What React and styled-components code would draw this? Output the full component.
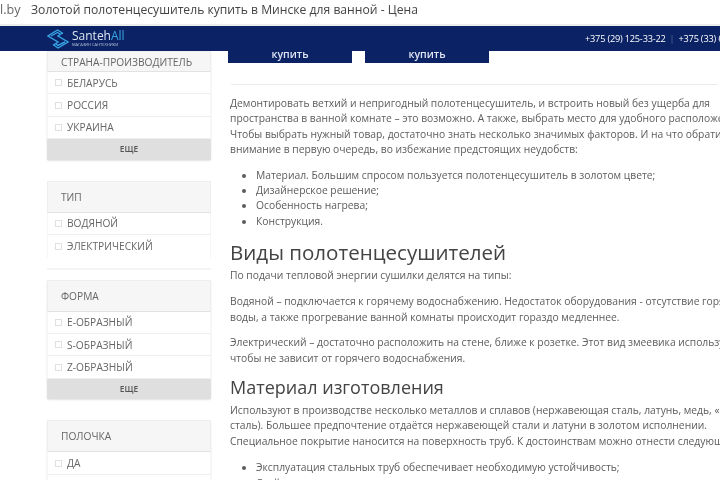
import React from "react";
import styled, { createGlobalStyle } from "styled-components";

const GlobalStyle = createGlobalStyle`
  html, body {
    margin: 0;
    padding: 0;
    background: #fff;
  }
  * {
    box-sizing: border-box;
  }
`;

const Page = styled.div`
  width: 720px;
  height: 480px;
  overflow: hidden;
  background: #fff;
  font-family: "Open Sans", "Noto Sans", sans-serif;
  color: #5c5c5c;
  filter: blur(0.5px);
`;

const TitleStrip = styled.div`
  height: 26px;
  display: flex;
  align-items: center;
  border-bottom: 2px solid #ededed;
  font-size: 12.15px;
  color: #444;
  white-space: nowrap;
  padding-bottom: 6px;
`;

const Domain = styled.span`
  width: 31px;
  font-size: 12.6px;
  color: #666;
`;

const NavBar = styled.header`
  position: relative;
  z-index: 2;
  height: 25px;
  background: #0b2265;
  display: flex;
  align-items: center;
  padding-left: 47px;
  white-space: nowrap;
  overflow: hidden;
`;

const Logo = styled.div`
  display: flex;
  align-items: center;
  gap: 3px;
`;

const LogoWords = styled.div`
  display: flex;
  flex-direction: column;
  line-height: 1;
`;

const LogoName = styled.span`
  font-size: 12px;
  color: #dde5f2;
  span {
    color: #38a5e4;
  }
`;

const LogoSub = styled.span`
  font-size: 4px;
  color: #b8c4da;
  margin-top: 1px;
`;

const Phones = styled.div`
  margin-left: auto;
  width: 135px;
  overflow: hidden;
  font-size: 9.2px;
  color: #fff;
  letter-spacing: -0.2px;
  padding-bottom: 1px;
  i {
    font-style: normal;
    color: #5a6c9c;
    margin: 0 4px;
  }
`;

const Body = styled.div`
  display: flex;
`;

const Sidebar = styled.aside`
  width: 164px;
  margin-left: 47px;
  flex: none;
  display: flex;
  flex-direction: column;
`;

const Panel = styled.section`
  margin-bottom: ${(p) => p.$gap || 21}px;
  border-radius: 2px;
  box-shadow: ${(p) => (p.$flat ? "none" : "0 1px 2px rgba(0, 0, 0, 0.12)")};
`;

const PanelHead = styled.div`
  height: ${(p) => p.$height || 32}px;
  background: #f6f6f6;
  border: 1px solid #eee;
  border-bottom: 1px solid #e2e2e2;
  display: flex;
  align-items: center;
  padding-left: 13px;
  font-size: 10.2px;
  color: #666;
  white-space: nowrap;
`;

const Row = styled.div`
  height: 22.4px;
  display: flex;
  align-items: center;
  gap: 5px;
  padding-left: 8px;
  border-bottom: 1px solid #eee;
  border-left: 1px solid #f6f6f6;
  border-right: 1px solid #f6f6f6;
  font-size: 10.2px;
  color: #666;
  &:last-of-type {
    border-bottom: ${(p) => (p.$open ? "none" : "1px solid #eee")};
  }
`;

const Check = styled.span`
  width: 7px;
  height: 7px;
  margin-left: -1px;
  border: 1px solid #e0e0e0;
  background: #fff;
  flex: none;
`;

const More = styled.div`
  height: 20.6px;
  padding-bottom: 1px;
  background: #dfdfdf;
  display: flex;
  align-items: center;
  justify-content: center;
  font-size: 8.4px;
  font-weight: 600;
  color: #555;
`;

const Divider = styled.div`
  height: 2px;
  background: #f4f4f4;
  margin-bottom: 10px;
`;

const Main = styled.main`
  margin-left: 17px;
  width: 490px;
  flex: none;
  font-size: 10.3px;
  line-height: 15.4px;
  white-space: nowrap;
`;

const Buttons = styled.div`
  display: flex;
  gap: 13px;
  margin-top: -10px;
`;

const BuyButton = styled.div`
  width: 124px;
  height: 22px;
  background: #0b2265;
  color: #dfe5f2;
  font-size: 10.5px;
  font-weight: 600;
  line-height: 26px;
  text-align: center;
  overflow: hidden;
`;

const Rule = styled.div`
  height: 1px;
  background: #ececec;
  margin: 21px 0 11px 3px;
`;

const Para = styled.p`
  margin: 0 0 10px 2px;
`;

const Bullets = styled.ul`
  margin: 0 0 0 2px;
  padding: 0 0 0 26px;
`;

const Article = styled.div`
  line-height: 15.7px;
`;

const Heading = styled.h2`
  margin: ${(p) => p.$top}px 0 ${(p) => p.$bottom}px 2px;
  font-weight: 400;
  font-size: ${(p) => p.$size}px;
  line-height: ${(p) => p.$line}px;
  color: #444;
`;

function FilterPanel({ title, items, more, headHeight, gap, flat, open }) {
  return (
    <Panel $gap={gap} $flat={flat}>
      <PanelHead $height={headHeight}>{title}</PanelHead>
      {items.map((item) => (
        <Row key={item} $open={open}>
          <Check />
          {item}
        </Row>
      ))}
      {more && <More>ЕЩЕ</More>}
    </Panel>
  );
}

export default function App() {
  return (
    <Page>
      <GlobalStyle />
      <TitleStrip>
        <Domain>l.by</Domain>
        Золотой полотенцесушитель купить в Минске для ванной - Цена
      </TitleStrip>
      <NavBar>
        <Logo>
          <svg width="22" height="20" viewBox="0 0 22 20" fill="none" stroke="#38a5e4" strokeWidth="1.4">
            <path d="M16 4.5 L10.5 1 L1 7 L11 13 L6.5 16" />
            <path d="M6 15.5 L11 19 L21 13 L11 7 L15.5 4" />
            <path d="M4 7 L10.5 3.5 L13 5" />
            <path d="M18 13 L11 16.5 L9 15" />
          </svg>
          <LogoWords>
            <LogoName>
              Santeh<span>All</span>
            </LogoName>
            <LogoSub>МАГАЗИН САНТЕХНИКИ</LogoSub>
          </LogoWords>
        </Logo>
        <Phones>
          +375 (29) 125-33-22<i>|</i>+375 (33) 625-33-22
        </Phones>
      </NavBar>
      <Body>
        <Sidebar>
          <FilterPanel
            title="СТРАНА-ПРОИЗВОДИТЕЛЬ"
            headHeight={21}
            items={["БЕЛАРУСЬ", "РОССИЯ", "УКРАИНА"]}
            more
          />
          <FilterPanel title="ТИП" items={["ВОДЯНОЙ", "ЭЛЕКТРИЧЕСКИЙ"]} gap={10} flat open />
          <Divider />
          <FilterPanel title="ФОРМА" items={["Е-ОБРАЗНЫЙ", "S-ОБРАЗНЫЙ", "Z-ОБРАЗНЫЙ"]} more />
          <FilterPanel title="ПОЛОЧКА" items={["ДА", "НЕТ"]} />
        </Sidebar>
        <Main>
          <Buttons>
            <BuyButton>купить</BuyButton>
            <BuyButton>купить</BuyButton>
          </Buttons>
          <Rule />
          <Para>
            Демонтировать ветхий и непригодный полотенцесушитель, и встроить новый без ущерба для
            <br />
            пространства в ванной комнате – это возможно. А также, выбрать место для удобного расположения.
            <br />
            Чтобы выбрать нужный товар, достаточно знать несколько значимых факторов. И на что обратить
            <br />
            внимание в первую очередь, во избежание предстоящих неудобств:
          </Para>
          <Bullets>
            <li>Материал. Большим спросом пользуется полотенцесушитель в золотом цвете;</li>
            <li>Дизайнерское решение;</li>
            <li>Особенность нагрева;</li>
            <li>Конструкция.</li>
          </Bullets>
          <Article>
            <Heading $top={9} $bottom={2} $size={20.55} $line={28}>
              Виды полотенцесушителей
            </Heading>
            <Para>По подачи тепловой энергии сушилки делятся на типы:</Para>
            <Para>
              Водяной – подключается к горячему водоснабжению. Недостаток оборудования - отсутствие горячей
              <br />
              воды, а также прогревание ванной комнаты происходит гораздо медленнее.
            </Para>
            <Para>
              Электрический – достаточно расположить на стене, ближе к розетке. Этот вид змеевика используют,
              <br />
              чтобы не зависит от горячего водоснабжения.
            </Para>
            <Heading $top={0} $bottom={6} $size={18} $line={20}>
              Материал изготовления
            </Heading>
            <Para>
              Используют в производстве несколько металлов и сплавов (нержавеющая сталь, латунь, медь, «чёрная
              <br />
              сталь). Большее предпочтение отдаётся нержавеющей стали и латуни в золотом исполнении.
              <br />
              Специальное покрытие наносится на поверхность труб. К достоинствам можно отнести следующее:
            </Para>
            <Bullets>
              <li>Эксплуатация стальных труб обеспечивает необходимую устойчивость;</li>
              <li>Стойкость к коррозии;</li>
            </Bullets>
          </Article>
        </Main>
      </Body>
    </Page>
  );
}
